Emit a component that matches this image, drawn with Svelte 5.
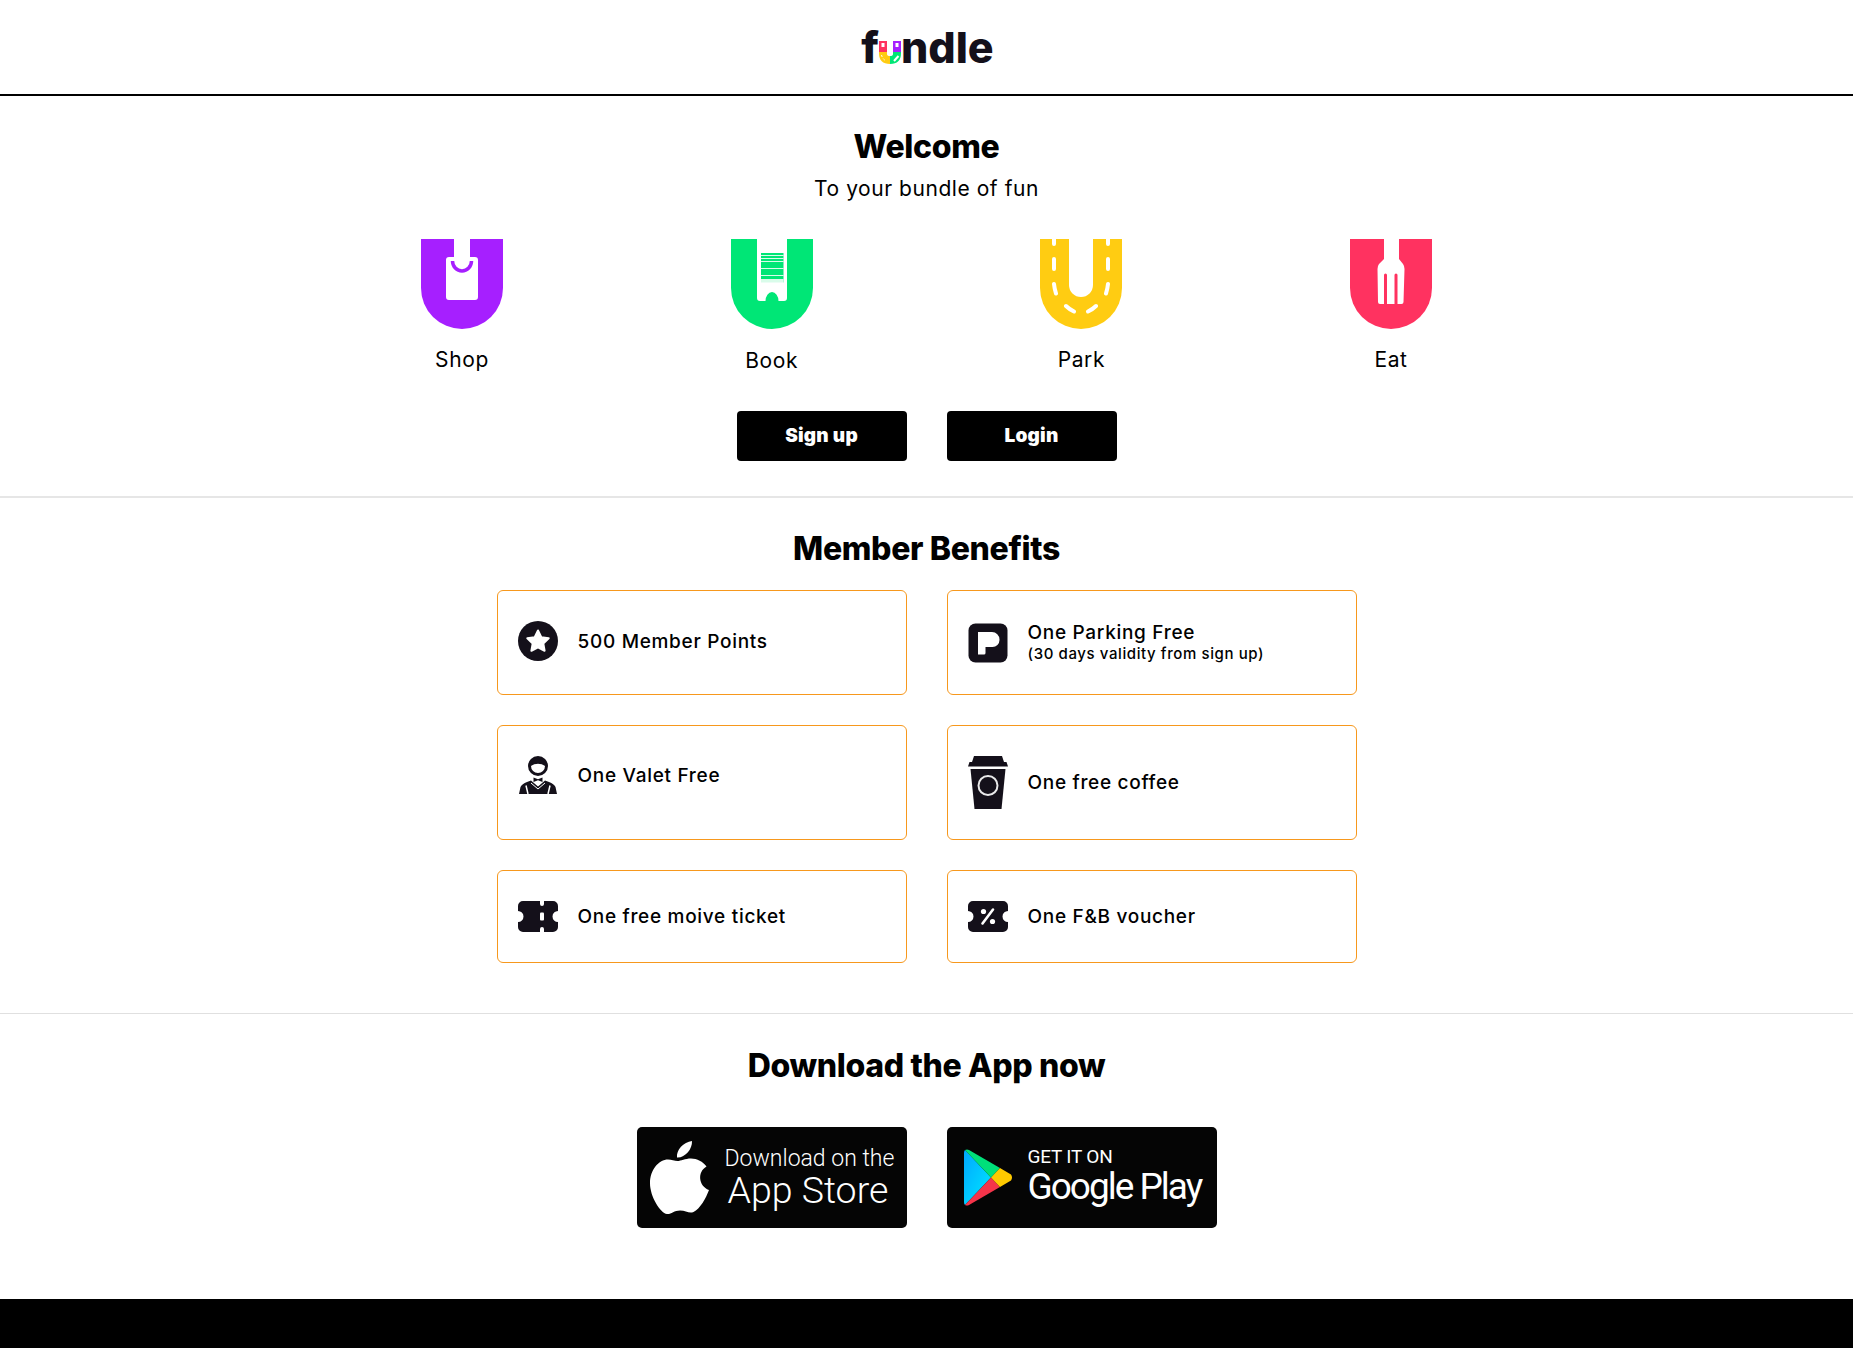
<script lang="ts">
  const services = [
    { name: 'Shop', type: 'shop' },
    { name: 'Book', type: 'book' },
    { name: 'Park', type: 'park' },
    { name: 'Eat', type: 'eat' }
  ];

  const benefits = [
    { icon: 'star', title: '500 Member Points' },
    { icon: 'parking', title: 'One Parking Free', note: '(30 days validity from sign up)' },
    { icon: 'valet', title: 'One Valet Free' },
    { icon: 'coffee', title: 'One free coffee' },
    { icon: 'ticket', title: 'One free moive ticket' },
    { icon: 'voucher', title: 'One F&B voucher' }
  ];

  const UBODY = 'M0 0H82V49A41 41 0 0 1 0 49Z';
  const TICKET = 'M5 0H35a5 5 0 0 1 5 5V10a5.500 5.500 0 0 0 0 11V26a5 5 0 0 1-5 5H5a5 5 0 0 1-5-5V21a5.500 5.500 0 0 0 0-11V5a5 5 0 0 1 5-5Z';
  // stripes on the barcode of the Book tile: [y, height]
  const stripes = [[2, 1], [5, 1], [8, 1], [15, 1], [22, 1], [26, 2], [28, 4]];
</script>

{#snippet tile(type: string)}
  <svg class="tile" viewBox="0 0 82 90" aria-hidden="true">
    {#if type === 'shop'}
      <path d={UBODY} fill="#a61fff" />
      <path d="M33 0H49V18H54a3 3 0 0 1 3 3V58a3 3 0 0 1-3 3H28a3 3 0 0 1-3-3V21a3 3 0 0 1 3-3H33Z" fill="#fff" />
      <path d="M31.500 22a9.500 10 0 0 0 19 0" fill="none" stroke="#a61fff" stroke-width="3.500" />
    {:else if type === 'book'}
      <path d={UBODY} fill="#00e676" />
      <path d="M26 0H56V59a3 3 0 0 1-3 3H47.500a6.500 9 0 0 0-13 0H29a3 3 0 0 1-3-3Z" fill="#fff" />
      <rect x="30" y="14" width="22.500" height="29.500" fill="#00e676" />
      {#each stripes as [y, h]}
        <rect x="30" y={14 + y} width="22.500" height={h} fill="#fff" opacity="0.85" />
      {/each}
    {:else if type === 'park'}
      <path d={UBODY} fill="#ffcc12" />
      <path d="M29 0H53V46a12 12 0 0 1-24 0Z" fill="#fff" />
      <g fill="none" stroke="#fff" stroke-width="4" stroke-linecap="round">
        <path d="M14 0V5M14 20V30M14 45Q14.500 50 16 54.500M26 67Q29 70 34 72.500" />
        <path d="M68 0V5M68 20V30M68 45Q67.500 50 66 54.500M56 67Q53 70 48 72.500" />
      </g>
    {:else}
      <path d={UBODY} fill="#ff3260" />
      <path d="M34 0H49V20L53 25Q54.500 27 54.500 30L53.500 63a2 2 0 0 1-2 2H30a2 2 0 0 1-2-2L27.500 30Q27.500 27 29 25L34 20Z" fill="#fff" />
      <path d="M35.500 36V66M46 36V66" stroke="#ff3260" stroke-width="3" stroke-linecap="round" />
    {/if}
  </svg>
{/snippet}

{#snippet benefitIcon(icon: string)}
  {#if icon === 'star'}
    <svg class="ben-icon" width="40" height="40" viewBox="0 0 40 40" aria-hidden="true">
      <circle cx="20" cy="20" r="20" fill="#14101a" />
      <path d="M20 9.500L23.300 16.200L30.700 17.300L25.300 22.500L26.600 29.800L20 26.300L13.400 29.800L14.700 22.500L9.300 17.300L16.700 16.200Z" fill="#fff" stroke="#fff" stroke-width="2" stroke-linejoin="round" />
    </svg>
  {:else if icon === 'parking'}
    <svg class="ben-icon" width="40" height="40" viewBox="0 0 40 40" aria-hidden="true">
      <rect x="0.500" y="0.500" width="39" height="39" rx="7" fill="#14101a" />
      <path d="M10 9H24a7.500 7.500 0 0 1 7.500 7.500V17a7 7 0 0 1-7 7H17.500V30a1.500 1.500 0 0 1-1.500 1.500H10Z" fill="#fff" />
    </svg>
  {:else if icon === 'valet'}
    <svg class="ben-icon" width="40" height="39" viewBox="0 0 40 39" aria-hidden="true">
      <circle cx="20" cy="10" r="8.500" fill="#fff" stroke="#14101a" stroke-width="3" />
      <path d="M12 9.500Q12.500 3 20 3T28 9.500Q24 7 20 7T12 9.500Z" fill="#14101a" stroke="#14101a" stroke-width="1.500" />
      <path d="M1 38L2.500 31Q4 28 9 26L13 24.500L20 30.500L27 24.500L31 26Q36 28 37.500 31L39 38Z" fill="#14101a" />
      <path d="M15.500 21.500L20 23.200L24.500 21.500V26L20 24.300L15.500 26Z" fill="#14101a" />
      <path d="M8 29.500L10 38M32 29.500L30 38" stroke="#fff" stroke-width="1.500" />
      <path d="M13 27L20 33L27 27" fill="none" stroke="#fff" stroke-width="1" />
    </svg>
  {:else if icon === 'coffee'}
    <svg class="ben-icon" width="40" height="53" viewBox="0 0 40 53" aria-hidden="true">
      <path d="M6 0H34L36 6H38.500L40 10.500H0L1.500 6H4Z" fill="#14101a" />
      <path d="M2.500 13H37.500L33.500 53H6.500Z" fill="#14101a" />
      <circle cx="20" cy="29.500" r="9.500" fill="none" stroke="#e9e9ea" stroke-width="2" />
    </svg>
  {:else if icon === 'ticket'}
    <svg class="ben-icon" width="40" height="31" viewBox="0 0 40 31" aria-hidden="true">
      <path d={TICKET} fill="#14101a" />
      <path d="M22 0H26V3a2 2 0 0 1-4 0ZM22 31H26V28a2 2 0 0 0-4 0Z" fill="#fff" />
      <rect x="22" y="11.500" width="4" height="8" rx="1" fill="#fff" />
    </svg>
  {:else}
    <svg class="ben-icon" width="40" height="31" viewBox="0 0 40 31" aria-hidden="true">
      <path d={TICKET} fill="#14101a" />
      <circle cx="15.500" cy="10.500" r="2.600" fill="#fff" />
      <circle cx="24.500" cy="20.500" r="2.600" fill="#fff" />
      <path d="M25 8.500L14.500 22.500" stroke="#fff" stroke-width="2.600" stroke-linecap="round" />
    </svg>
  {/if}
{/snippet}

<div class="page">
  <header class="topbar">
    <div class="logo">
      <span>f</span>
      <svg class="logo-u" width="22" height="23" viewBox="0 0 22 23" aria-hidden="true">
        <path d="M0 0H8V11H0Z" fill="#ff3260" />
        <path d="M14 0H22V11H14Z" fill="#a61fff" />
        <path d="M0 11H8V13Q8 15 11 15V23Q0 23 0 12Z" fill="#ffcc12" />
        <path d="M22 11H14V13Q14 15 11 15V23Q22 23 22 12Z" fill="#00e676" />
        <rect x="2.500" y="2" width="3" height="4" fill="#fff" />
        <rect x="16.500" y="2" width="3" height="4" fill="#fff" />
        <path d="M2.500 14Q3.500 18 7 20" fill="none" stroke="#fff" stroke-width="1" stroke-dasharray="2 2" />
        <path d="M15 20L19.500 15" stroke="#fff" stroke-width="2" />
      </svg>
      <span>ndle</span>
    </div>
  </header>

  <section class="hero">
    <h1>Welcome</h1>
    <p class="tagline">To your bundle of fun</p>
    <div class="tiles">
      {#each services as s}
        <div class="service" class:lower={s.type === 'book'}>
          {@render tile(s.type)}
          <span>{s.name}</span>
        </div>
      {/each}
    </div>
    <div class="actions">
      <button type="button">Sign up</button>
      <button type="button">Login</button>
    </div>
  </section>

  <section class="benefits">
    <h2>Member Benefits</h2>
    <div class="benefit-grid">
      {#each benefits as b}
        <div class="card">
          <div class="card-row">
            {@render benefitIcon(b.icon)}
            <div class="card-text">
              <div class="card-title">{b.title}</div>
              {#if b.note}<div class="card-note">{b.note}</div>{/if}
            </div>
          </div>
        </div>
      {/each}
    </div>
  </section>

  <section class="download">
    <h2>Download the App now</h2>
    <div class="stores">
      <a class="store apple" href="#appstore">
        <svg width="60" height="74" viewBox="0 0 60 74" aria-hidden="true">
          <path d="M42 0C42.500 8 35 17 27 16.500C26 9 33.500 1 42 0Z" fill="#fff" />
          <path d="M27.500 20C31 20 35 17.500 41 17.500C47 17.500 53 20.500 56.500 25.500C47 31 48.500 45 59 49C56 57 50 68 43.500 71C39 73 36 69.500 30 69.500C24 69.500 21 73.500 17 73C10 72 0 55 0 42.500C0 28.500 9 18.500 18 18.500C21.500 18.500 24.500 20 27.500 20Z" fill="#fff" />
        </svg>
        <div class="store-text">
          <span class="store-small">Download on the</span>
          <span class="store-big">App Store</span>
        </div>
      </a>
      <a class="store google" href="#googleplay">
        <svg width="49" height="57" viewBox="0 0 49 57" aria-hidden="true">
          <defs>
            <linearGradient id="play-blue" x1="0" y1="0" x2="1" y2="1">
              <stop offset="0" stop-color="#00a8ff" />
              <stop offset="1" stop-color="#00e8ff" />
            </linearGradient>
          </defs>
          <path d="M1 1L27 28.500L1 56Q0 55 0 53V4Q0 2 1 1Z" fill="url(#play-blue)" />
          <path d="M1 1Q3 0 5 1L36 19L27 28.500Z" fill="#00e07a" />
          <path d="M1 56Q3 57 5 56L36 38L27 28.500Z" fill="#f5344a" />
          <path d="M36 19L47 25.500Q49 28.500 47 31.500L36 38L27 28.500Z" fill="#ffca00" />
        </svg>
        <div class="store-text play">
          <span class="store-get">GET IT ON</span>
          <span class="store-play">Google Play</span>
        </div>
      </a>
    </div>
  </section>

  <footer class="bottom"></footer>
</div>

<style>
  :global(body) {
    margin: 0;
    background: #fff;
  }

  .page {
    font-family: Inter, "Noto Sans", sans-serif;
    color: #000;
    text-align: center;
  }

  .topbar {
    height: 94px;
    border-bottom: 2px solid #000;
    display: flex;
    align-items: center;
    justify-content: center;
  }

  .logo {
    display: flex;
    align-items: flex-end;
    font-size: 43px;
    font-weight: 800;
    line-height: 34px;
    color: #14101a;
    height: 34px;
    padding-left: 2px;
  }

  .logo-u {
    flex: none;
  }

  h1, h2 {
    margin: 0;
    font-size: 32px;
    line-height: 40px;
    font-weight: 800;
    letter-spacing: -0.35px;
  }

  .hero {
    padding: 31px 0 35px;
    border-bottom: 2px solid #e6e6e6;
  }

  .tagline {
    margin: 10px 0 0;
    font-size: 21px;
    line-height: 24px;
    letter-spacing: 0.55px;
  }

  .tiles {
    display: grid;
    grid-template-columns: repeat(4, 309.7px);
    justify-content: center;
    margin-top: 38px;
  }

  .service {
    display: flex;
    flex-direction: column;
    align-items: center;
    gap: 19px;
    font-size: 21px;
    line-height: 24px;
    letter-spacing: 0.6px;
  }

  .service.lower span {
    position: relative;
    top: 1px;
  }

  .tile {
    width: 82px;
    height: 90px;
    display: block;
  }

  .actions {
    display: flex;
    justify-content: center;
    gap: 40px;
    margin-top: 39px;
  }

  button {
    width: 170px;
    height: 50px;
    border: 0;
    border-radius: 4px;
    background: #000;
    color: #fff;
    font-family: inherit;
    font-size: 19px;
    font-weight: 900;
    letter-spacing: 0.2px;
    padding: 0 0 2px;
  }

  .benefits {
    padding: 31px 0 50px;
    border-bottom: 1px solid #e0e0e0;
  }

  .benefit-grid {
    display: grid;
    grid-template-columns: repeat(2, 410px);
    justify-content: center;
    gap: 30px 40px;
    margin-top: 21px;
    text-align: left;
  }

  .card {
    border: 1px solid #f7981d;
    border-radius: 6px;
    padding: 30px 20px;
  }

  .card-row {
    display: flex;
    align-items: center;
    gap: 20px;
  }

  .ben-icon {
    flex: none;
    display: block;
  }

  .card-title {
    font-size: 19px;
    line-height: 23px;
    font-weight: 500;
    letter-spacing: 0.7px;
  }

  .card-note {
    font-size: 15px;
    line-height: 20px;
    font-weight: 500;
    letter-spacing: 0.6px;
  }

  .download {
    padding: 32px 0 71px;
  }

  .stores {
    display: flex;
    justify-content: center;
    gap: 40px;
    margin-top: 41px;
  }

  .store {
    width: 270px;
    height: 101px;
    border-radius: 5px;
    background: #050505;
    color: #fff;
    display: flex;
    align-items: center;
    text-decoration: none;
    text-align: left;
    box-sizing: border-box;
  }

  .apple {
    padding-left: 13px;
    gap: 15px;
  }

  .google {
    padding-left: 17px;
    gap: 15px;
  }

  .store-text {
    display: flex;
    flex-direction: column;
    font-family: Roboto, sans-serif;
  }

  .store-text.play {
    padding-bottom: 5px;
  }

  .store-small {
    font-size: 23px;
    line-height: 26px;
    font-weight: 300;
  }

  .store-big {
    font-size: 37.5px;
    line-height: 37px;
    font-weight: 300;
    margin-left: 3px;
  }

  .store-get {
    font-size: 19px;
    line-height: 24px;
    letter-spacing: -0.2px;
  }

  .store-play {
    font-size: 37px;
    line-height: 36px;
    letter-spacing: -2px;
  }

  .bottom {
    height: 49px;
    background: #000;
  }
</style>
